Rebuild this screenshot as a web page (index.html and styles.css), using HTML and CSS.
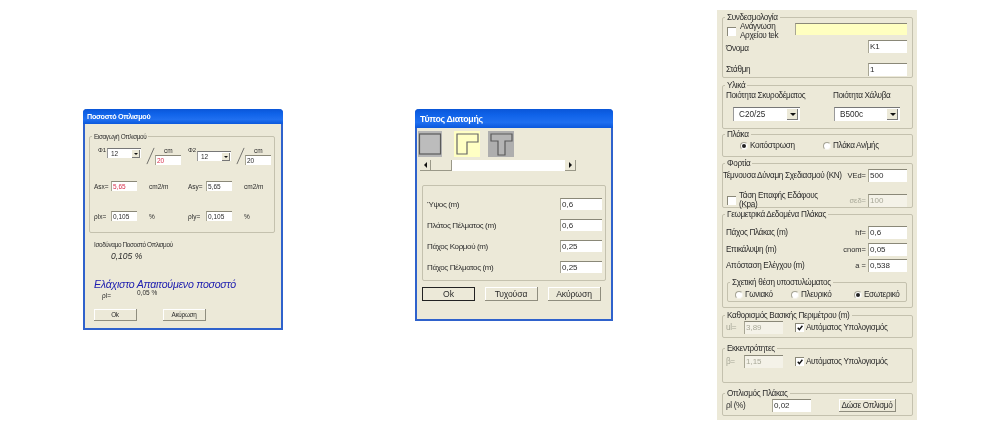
FILE: index.html
```html
<!DOCTYPE html>
<html lang="el">
<head>
<meta charset="utf-8">
<title>Διάτρηση πλάκας</title>
<link rel="stylesheet" href="styles.css">
</head>
<body>
<section class="window win-ratio">
  <header class="titlebar title-small">Ποσοστό Οπλισμού</header>
  <div class="ratio-body">
    <div class="group ratio-group">
      <span class="legend">Εισαγωγή Οπλισμού</span>
      <div class="ratio-bars">
        <span class="bar-label">Φ1</span>
        <div class="select sel-ratio sel-up"><span>12</span><i class="drop"></i></div>
        <svg class="slash" viewBox="0 0 10 18"><path d="M1 18 9 0"/></svg>
        <div class="stack"><span class="cm">cm</span><div class="field f-ratio red">20</div></div>
        <span class="bar-label">Φ2</span>
        <div class="select sel-ratio sel-down"><span>12</span><i class="drop"></i></div>
        <svg class="slash" viewBox="0 0 10 18"><path d="M1 18 9 0"/></svg>
        <div class="stack"><span class="cm">cm</span><div class="field f-ratio">20</div></div>
      </div>
      <div class="ratio-row ratio-as">
        <span>Asx=</span><div class="field f-ratio red">5,65</div><span>cm2/m</span>
        <span>Asy=</span><div class="field f-ratio">5,65</div><span>cm2/m</span>
      </div>
      <div class="ratio-row ratio-rho">
        <span>ρlx=</span><div class="field f-ratio">0,105</div><span>%</span>
        <span>ρly=</span><div class="field f-ratio">0,105</div><span>%</span>
      </div>
    </div>
    <p class="equiv">Ισοδύναμο Ποσοστό Οπλισμού</p>
    <p class="equiv-value">0,105 %</p>
    <p class="minimum">Ελάχιστο Απαιτούμενο ποσοστό</p>
    <div class="min-row"><span class="min-label">ρl=</span><span class="min-value">0,05 %</span></div>
    <div class="ratio-buttons">
      <div class="button btn-ratio">Ok</div>
      <div class="button btn-ratio">Ακύρωση</div>
    </div>
  </div>
</section>

<section class="window win-section">
  <header class="titlebar title-large">Τύπος Διατομής</header>
  <div class="section-body">
    <div class="shapes">
      <svg class="shape shape-square" viewBox="0 0 24 26"><rect width="24" height="26" fill="#b6b6b6"/><rect x="1.5" y="3" width="21" height="20" fill="#bcbcbc" stroke="#5a5a5a" stroke-width="1.2"/></svg>
      <svg class="shape shape-l" viewBox="0 0 26 26"><rect width="26" height="26" fill="#ffffc4"/><path d="M3 3H24V11H13V23H3Z" fill="#ffffc4" stroke="#666" stroke-width="1.2"/></svg>
      <svg class="shape shape-t" viewBox="0 0 26 26"><rect width="26" height="26" fill="#aeaeae"/><path d="M3 3H24V10H17V24H10V10H3Z" fill="#b4b4b4" stroke="#5a5a5a" stroke-width="1.2"/></svg>
    </div>
    <div class="scrollbar">
      <div class="arrow-btn"><i class="tri tri-left"></i></div>
      <div class="thumb"></div>
      <div class="track"></div>
      <div class="arrow-btn"><i class="tri tri-right"></i></div>
    </div>
    <div class="group section-group">
      <div class="section-row"><span>Ύψος (m)</span><div class="field f-section">0,6</div></div>
      <div class="section-row"><span>Πλάτος Πέλματος (m)</span><div class="field f-section">0,6</div></div>
      <div class="section-row"><span>Πάχος Κορμού (m)</span><div class="field f-section">0,25</div></div>
      <div class="section-row"><span>Πάχος Πέλματος (m)</span><div class="field f-section">0,25</div></div>
    </div>
    <div class="section-buttons">
      <div class="button btn-section btn-default">Ok</div>
      <div class="button btn-section">Τυχούσα</div>
      <div class="button btn-section">Ακύρωση</div>
    </div>
  </div>
</section>

<aside class="panel">
  <div class="group g-conn">
    <span class="legend">Συνδεσμολογία</span>
    <div class="row row-file">
      <i class="check"></i>
      <span class="two-line">Ανάγνωση<br>Αρχείου tek</span>
      <div class="field f-yellow"></div>
    </div>
    <div class="row row-name"><span>Όνομα</span><div class="field f-39">K1</div></div>
    <div class="row row-level"><span>Στάθμη</span><div class="field f-39">1</div></div>
  </div>

  <div class="group g-mat">
    <span class="legend">Υλικά</span>
    <div class="mat-grid">
      <span>Ποιότητα Σκυροδέματος</span>
      <span>Ποιότητα Χάλυβα</span>
      <div class="select sel-concrete"><span>C20/25</span><i class="drop"></i></div>
      <div class="select sel-steel"><span>B500c</span><i class="drop"></i></div>
    </div>
  </div>

  <div class="group g-slab">
    <span class="legend">Πλάκα</span>
    <div class="slab-grid">
      <label class="opt"><i class="radio on"></i>Κοιτόστρωση</label>
      <label class="opt"><i class="radio"></i>Πλάκα Αν/μής</label>
    </div>
  </div>

  <div class="group g-load">
    <span class="legend">Φορτία</span>
    <div class="row row-ved"><span class="grow">Τέμνουσα Δύναμη Σχεδιασμού (KN)</span><span class="eq">VEd=</span><div class="field f-39">500</div></div>
    <div class="row row-soil">
      <i class="check"></i>
      <span class="two-line grow">Τάση Επαφής Εδάφους<br>(Kpa)</span>
      <span class="eq muted">σεδ=</span><div class="field f-39 disabled">100</div>
    </div>
  </div>

  <div class="group g-geo">
    <span class="legend">Γεωμετρικά Δεδομένα Πλάκας</span>
    <div class="row row-hf"><span class="grow">Πάχος Πλάκας (m)</span><span class="eq">hf=</span><div class="field f-39">0,6</div></div>
    <div class="row row-cnom"><span class="grow">Επικάλυψη (m)</span><span class="eq">cnom=</span><div class="field f-39">0,05</div></div>
    <div class="row row-a"><span class="grow">Απόσταση Ελέγχου (m)</span><span class="eq">a =</span><div class="field f-39">0,538</div></div>
    <div class="group g-pos">
      <span class="legend">Σχετική θέση υποστυλώματος</span>
      <div class="pos-grid">
        <label class="opt"><i class="radio"></i>Γωνιακό</label>
        <label class="opt"><i class="radio"></i>Πλευρικό</label>
        <label class="opt"><i class="radio on"></i>Εσωτερικό</label>
      </div>
    </div>
  </div>

  <div class="group g-perim">
    <span class="legend">Καθορισμός Βασικής Περιμέτρου (m)</span>
    <div class="auto-row">
      <span class="muted">ul=</span><div class="field f-39 disabled">3,89</div>
      <i class="check checked"><svg viewBox="0 0 9 9"><path d="M2 4.2 3.8 6.4 7.2 2"/></svg></i>
      <span>Αυτόματος Υπολογισμός</span>
    </div>
  </div>

  <div class="group g-ecc">
    <span class="legend">Εκκεντρότητες</span>
    <div class="auto-row">
      <span class="muted">β=</span><div class="field f-39 disabled">1,15</div>
      <i class="check checked"><svg viewBox="0 0 9 9"><path d="M2 4.2 3.8 6.4 7.2 2"/></svg></i>
      <span>Αυτόματος Υπολογισμός</span>
    </div>
  </div>

  <div class="group g-reinf">
    <span class="legend">Οπλισμός Πλάκας</span>
    <div class="reinf-row">
      <span>ρl (%)</span><div class="field f-39">0,02</div>
      <div class="button btn-give">Δώσε Οπλισμό</div>
    </div>
  </div>
</aside>
</body>
</html>
```
FILE: styles.css
```css
* { box-sizing: border-box; }
html, body { margin: 0; padding: 0; }
body {
  position: relative;
  width: 1000px;
  height: 430px;
  overflow: hidden;
  background: #fff;
  color: #2c2c2c;
  font-family: "Liberation Sans", Arial, sans-serif;
}
p { margin: 0; }
i { display: block; font-style: normal; }

/* windows on the desktop */
.window {
  position: absolute;
  display: flex;
  flex-direction: column;
  background: #ece9d8;
  border: 2px solid #2f62cc;
  border-top: 0;
  border-radius: 4px 4px 0 0;
  filter: blur(0.35px);
}
.win-ratio { left: 83px; top: 109px; width: 200px; height: 221px; font-size: 6.5px; }
.win-section { left: 415px; top: 109px; width: 198px; height: 212px; font-size: 8px; letter-spacing: -0.37px; }
.panel {
  position: absolute;
  left: 717px;
  top: 10px;
  width: 200px;
  height: 410px;
  padding: 7px 4px 0 5px;
  background: #ece9d8;
  font-size: 8.2px;
  letter-spacing: -0.35px;
  filter: blur(0.35px);
}

.titlebar {
  margin: 0 -2px;
  display: flex;
  align-items: center;
  color: #fff;
  font-weight: 700;
  letter-spacing: -0.3px;
  border-radius: 4px 4px 0 0;
  background: linear-gradient(#0a56d8, #0f62e8 30%, #1f6ff0 70%, #0b58dc);
}
.title-small { height: 15px; padding-left: 4px; font-size: 7.2px; }
.title-large { height: 19px; padding-left: 5px; font-size: 8.8px; }

/* shared controls */
.group {
  position: relative;
  border: 1px solid #c4c1ae;
  border-radius: 2px;
}
.legend {
  position: absolute;
  top: -5px;
  left: 2px;
  padding: 0 2px;
  background: #ece9d8;
  line-height: 9px;
  white-space: nowrap;
}
.win-ratio .legend { font-size: 6.4px; letter-spacing: -0.37px; }
.field {
  height: 13px;
  padding-left: 1px;
  background: #fff;
  border-top: 1px solid #8a8878;
  border-left: 1px solid #a8a694;
  font-size: 8px;
  letter-spacing: 0;
  line-height: 12px;
  overflow: hidden;
}
.f-39 { flex: none; width: 39px; }
.red { color: #d8304c; }
.disabled { background: #f4f2e8; color: #a8a898; }
.muted { color: #a8a898; }
.f-yellow {
  flex: none;
  width: 112px;
  height: 12px;
  margin-left: auto;
  align-self: flex-start;
  background: #ffffc0;
}
.select {
  display: flex;
  align-items: center;
  justify-content: space-between;
  padding: 0 2px 0 5px;
  background: #fff;
  border-top: 1px solid #777;
  border-left: 1px solid #999;
  letter-spacing: 0;
}
.drop {
  position: relative;
  width: 11px;
  height: 11px;
  background: #ece9d8;
  border-right: 1px solid #777;
  border-bottom: 1px solid #777;
}
.drop::after {
  content: "";
  position: absolute;
  left: 3px;
  top: 4px;
  border: 3px solid transparent;
  border-top-color: #111;
  border-bottom: 0;
}
.button {
  display: flex;
  align-items: center;
  justify-content: center;
  background: #ece9d8;
  border-right: 1px solid #8f8d7e;
  border-bottom: 1px solid #8f8d7e;
  box-shadow: inset 1px 1px 0 #fff;
  white-space: nowrap;
}
.check {
  flex: none;
  width: 9px;
  height: 9px;
  background: #fff;
  border-top: 1px solid #8a8878;
  border-left: 1px solid #8a8878;
}
.check svg { display: block; width: 8px; height: 8px; }
.check svg path { fill: none; stroke: #111; stroke-width: 1.6; }
.radio {
  flex: none;
  position: relative;
  width: 8px;
  height: 8px;
  margin-right: 2px;
  background: #fff;
  border-radius: 50%;
  border: 1px solid #a5a393;
  border-right-color: #f4f2e8;
  border-bottom-color: #f4f2e8;
}
.radio.on::after {
  content: "";
  position: absolute;
  left: 1px;
  top: 1px;
  width: 4px;
  height: 4px;
  border-radius: 50%;
  background: #222;
}
.opt { display: flex; align-items: center; white-space: nowrap; }
.row { display: flex; align-items: center; justify-content: space-between; padding-right: 5px; white-space: nowrap; }
.grow { flex: 1; }
.eq { margin-right: 2px; letter-spacing: 0; font-size: 7.5px; }
.two-line { display: block; line-height: 8.5px; }

/* percentage dialog */
.ratio-body { flex: 1; padding: 12px 0 0 4px; display: flex; flex-direction: column; }
.ratio-group { width: 186px; height: 97px; padding: 9px 0 0 4px; }
.ratio-bars {
  display: grid;
  grid-template-columns: 9px 39px 9px 33px 9px 39px 9px 30px;
  height: 20px;
  margin-left: 4px;
  align-items: start;
}
.bar-label { margin-top: 1px; font-size: 6px; }
.sel-ratio { width: 34px; height: 10px; padding: 0 1px 0 3px; }
.sel-up { margin-top: 2px; }
.sel-down { margin-top: 5px; }
.sel-ratio .drop { width: 8px; height: 8px; }
.sel-ratio .drop::after { left: 2px; top: 3px; border-width: 2px; border-bottom: 0; }
.slash { width: 9px; height: 18px; margin-top: 1px; }
.slash path { fill: none; stroke: #444; stroke-width: 0.8; }
.stack { display: flex; flex-direction: column; }
.cm { height: 9px; margin-left: 9px; line-height: 9px; }
.f-ratio { width: 26px; height: 10px; line-height: 10px; font-size: 6.5px; }
.ratio-row {
  display: grid;
  grid-template-columns: 17px 38px 39px 18px 38px 30px;
  height: 10px;
  align-items: center;
}
.ratio-as { margin-top: 15px; }
.ratio-rho { margin-top: 20px; }
.equiv { margin: 8px 0 0 5px; font-size: 6.4px; letter-spacing: -0.37px; line-height: 8px; }
.equiv-value { margin: 2px 0 0 22px; font-size: 8.5px; font-style: italic; line-height: 10px; }
.minimum {
  margin: 18px 0 0 5px;
  color: #2020b0;
  font-size: 10.6px;
  font-style: italic;
  letter-spacing: -0.25px;
  line-height: 11px;
  white-space: nowrap;
}
.min-row { display: flex; height: 9px; margin-top: -1px; }
.min-label { margin: 3px 0 0 13px; width: 35px; line-height: 8px; }
.min-value { line-height: 8px; }
.ratio-buttons { display: flex; gap: 26px; margin: 11px 0 0 5px; }
.btn-ratio { width: 43px; height: 12px; font-size: 6.4px; letter-spacing: -0.3px; }

/* section dialog */
.section-body { flex: 1; padding: 3px 0 0 1px; display: flex; flex-direction: column; }
.shapes { display: flex; gap: 10px; height: 26px; }
.shape { display: block; width: 26px; height: 26px; }
.shape-square { width: 24px; }
.shape-l { margin-left: 2px; }
.shape-t { margin-left: -2px; }
.scrollbar {
  display: flex;
  width: 156px;
  height: 11px;
  margin: 3px 0 0 2px;
}
.arrow-btn {
  width: 11px;
  display: flex;
  align-items: center;
  justify-content: center;
  background: #ece9d8;
  border-right: 1px solid #9a9888;
  border-bottom: 1px solid #9a9888;
}
.tri { width: 0; height: 0; border: 3px solid transparent; }
.tri-left { border-right-color: #111; border-left: 0; }
.tri-right { border-left-color: #111; border-right: 0; }
.thumb { width: 21px; background: #ece9d8; border-right: 1px solid #9a9888; border-bottom: 1px solid #9a9888; }
.track { flex: 1; background: #fff; }
.section-group {
  width: 184px;
  height: 96px;
  margin: 14px 0 0 4px;
  padding: 12px 3px 0 4px;
  display: flex;
  flex-direction: column;
  gap: 9px;
}
.section-row { display: flex; align-items: center; justify-content: space-between; height: 12px; }
.f-section { width: 42px; height: 12px; line-height: 12px; }
.section-buttons { display: flex; gap: 10px; margin: 6px 0 0 4px; }
.btn-section { width: 53px; height: 14px; font-size: 8.6px; letter-spacing: -0.1px; }
.btn-default { border: 1px solid #222; box-shadow: none; }

/* property panel */
.g-conn { height: 61px; padding: 5px 0 0 3px; }
.row-file { height: 17px; }
.row-file .check { margin: 0 4px 0 1px; }
.row-name { align-items: flex-end; }
.row-level { margin-top: 10px; }
.g-mat { height: 44px; margin-top: 7px; padding: 4px 0 0 3px; }
.mat-grid { display: grid; grid-template-columns: 107px 80px; grid-template-rows: 10px 14px; row-gap: 7px; align-items: center; white-space: nowrap; }
.sel-concrete { width: 67px; height: 14px; margin-left: 7px; }
.sel-steel { width: 66px; height: 14px; margin-left: 1px; }
.g-slab { height: 23px; margin-top: 5px; padding: 5px 0 0 17px; }
.slab-grid { display: grid; grid-template-columns: 83px 80px; height: 11px; }
.g-load { height: 45px; margin-top: 6px; padding-top: 5px; }
.row-soil { margin-top: 10px; padding-left: 4px; }
.row-soil .check { margin-right: 3px; }
.g-geo { height: 94px; margin-top: 6px; padding: 11px 0 0 3px; }
.row-cnom { margin-top: 4px; }
.row-a { margin-top: 3px; }
.g-pos { width: 180px; height: 20px; margin: 10px 0 0 1px; padding: 6px 0 0 7px; }
.pos-grid { display: grid; grid-template-columns: 56px 63px 50px; height: 11px; }
.g-perim { height: 23px; margin-top: 7px; padding-top: 5px; }
.g-ecc { height: 35px; margin-top: 10px; padding-top: 6px; }
.auto-row {
  display: grid;
  grid-template-columns: 18px 51px 11px auto;
  align-items: center;
  padding-left: 3px;
  white-space: nowrap;
}
.g-reinf { height: 23px; margin-top: 10px; padding: 5px 0 0 3px; }
.reinf-row { display: grid; grid-template-columns: 46px 39px 85px; align-items: center; white-space: nowrap; }
.btn-give { height: 13px; margin-left: 28px; width: 57px; }
```
